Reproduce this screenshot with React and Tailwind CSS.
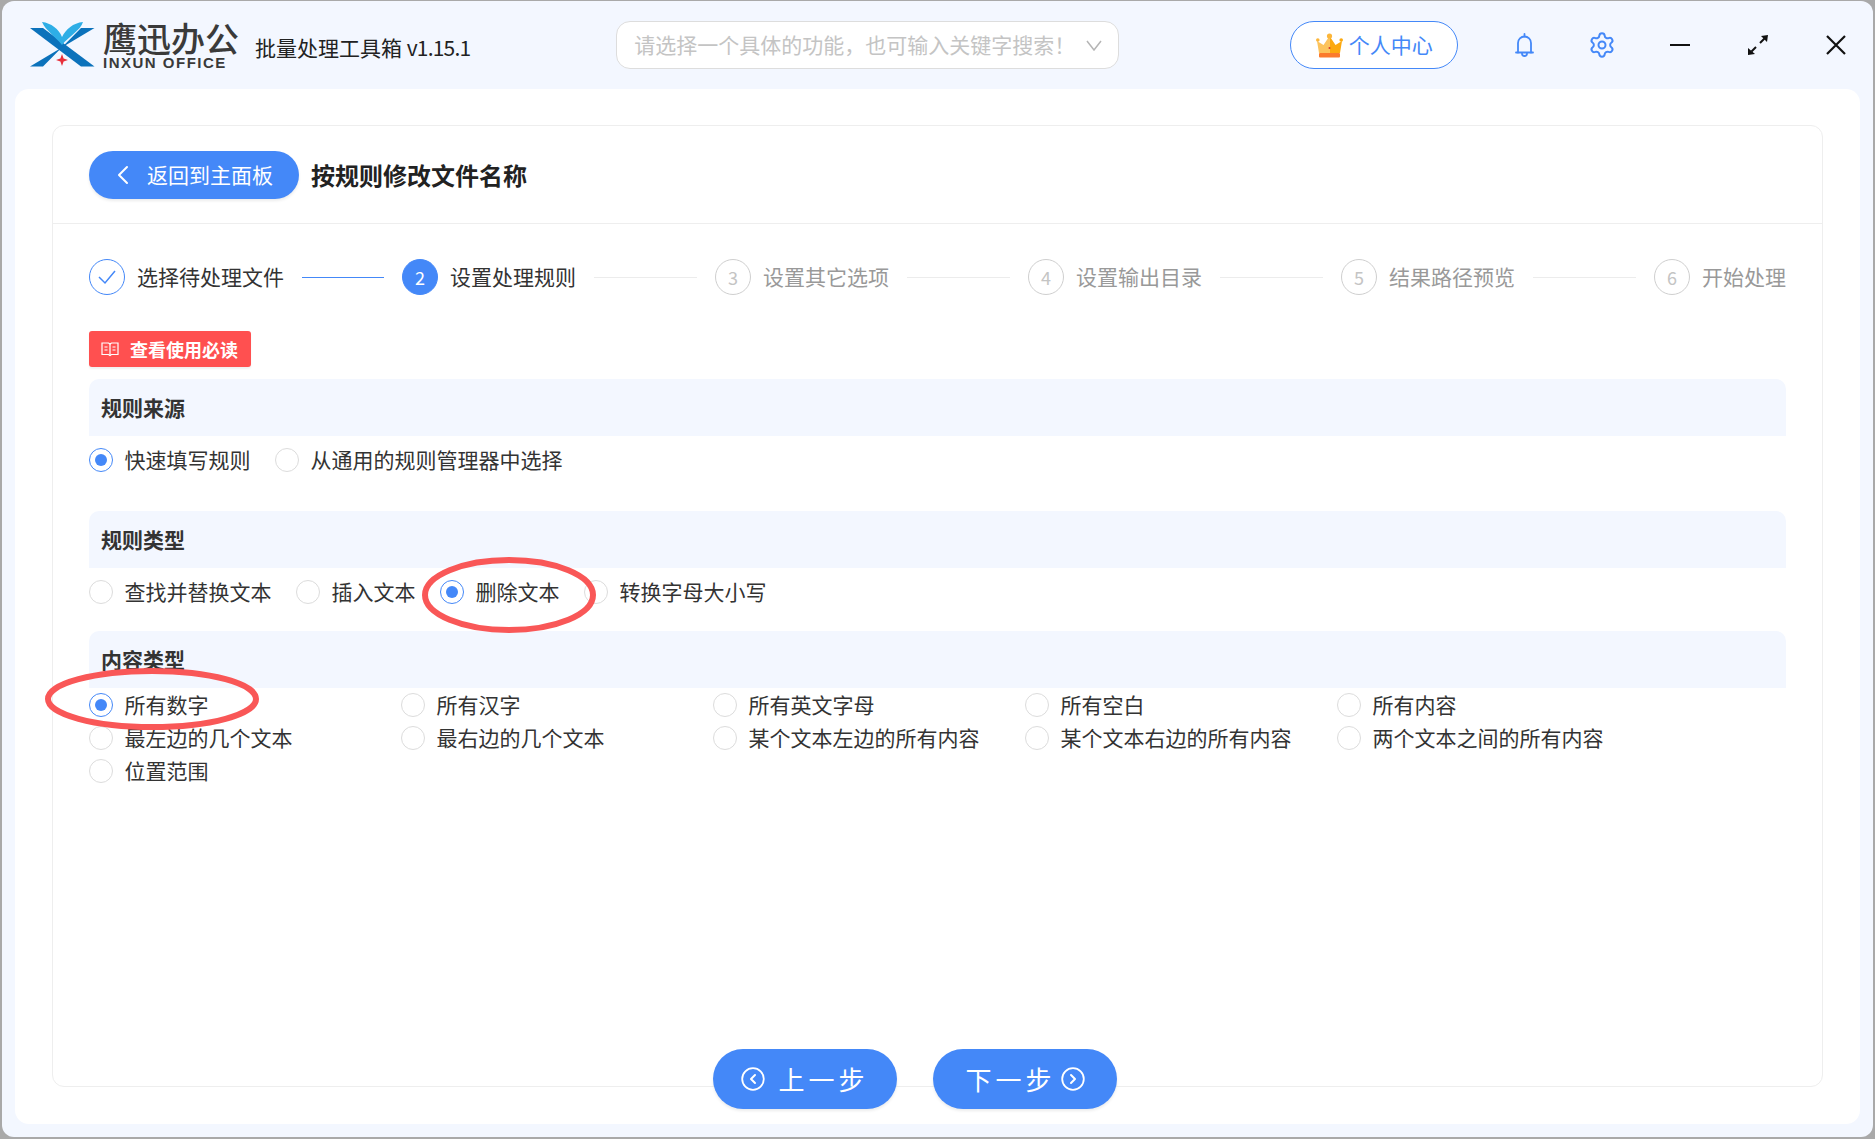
import React from "react";
import { Settings } from "lucide-react";

const STEPS = ["选择待处理文件", "设置处理规则", "设置其它选项", "设置输出目录", "结果路径预览", "开始处理"];

function Logo() {
  return (
    <svg width="66" height="46" viewBox="28 21 66 46" className="shrink-0">
      <polygon points="29,27 42,27 93.5,65.5 80,65.5" fill="#0b72bb" />
      <polygon points="93.5,27 80,27 42,65.5 29,65.5" fill="#0b72bb" />
      <path d="M41 21 C50 22 58 28 61 36 C65 28 72 22 82 21 C79 30 68 35 61 44 C54 35 45 30 41 21 Z" fill="#2eaee6" />
      <path d="M61 53 L62.6 57.4 L67 59 L62.6 60.6 L61 65 L59.4 60.6 L55 59 L59.4 57.4 Z" fill="#e8303a" />
    </svg>
  );
}

function Crown() {
  return (
    <svg width="27" height="25" viewBox="0 0 27 25" className="shrink-0">
      <path d="M3 20 L1 8 L7.5 12 L13.5 3 L13.5 20 Z" fill="#fcc35c" />
      <path d="M24 20 L26 8 L19.5 12 L13.5 3 L13.5 20 Z" fill="#fca90f" />
      <circle cx="1.8" cy="7" r="1.8" fill="#fcb63a" />
      <circle cx="25.2" cy="7" r="1.8" fill="#fca90f" />
      <circle cx="13.5" cy="3" r="2.6" fill="#fcb63a" />
      <rect x="3" y="20" width="21" height="4.5" rx="1" fill="#fb7a2c" />
      <circle cx="13.5" cy="15" r="1" fill="#d5362b" />
    </svg>
  );
}

function Bell() {
  return (
    <svg width="19" height="24" viewBox="0 0 19 24" fill="none" stroke="#4488f8" strokeWidth="1.8" strokeLinecap="round" strokeLinejoin="round" className="shrink-0">
      <path d="M3 19.5V10a6.5 6.5 0 0 1 13 0v9.500" />
      <path d="M1 19.500h17" />
      <path d="M7 20.500a2.500 2.500 0 0 0 5 0" />
      <path d="M9.500 1v2.500" />
    </svg>
  );
}

function Expand() {
  return (
    <svg width="20" height="20" viewBox="0 0 20 20" className="shrink-0">
      <path d="M12 8 L16.500 3.500" stroke="#111" strokeWidth="2" />
      <path d="M13 1 L20 0 L19 7 Z" fill="#111" />
      <path d="M8 12 L3.500 16.500" stroke="#111" strokeWidth="2" />
      <path d="M0 13 L0 20 L7 19 Z" fill="#111" />
    </svg>
  );
}

function Close() {
  return (
    <svg width="20" height="20" viewBox="0 0 20 20" stroke="#111" strokeWidth="2.200" className="shrink-0">
      <path d="M1 1 L19 19 M19 1 L1 19" />
    </svg>
  );
}

function Chevron({ dir = "left", size = 14, h = 20, w = 2 }) {
  return (
    <svg width={size} height={h} viewBox="0 0 14 20" fill="none" stroke="currentColor" strokeWidth={w} strokeLinecap="round" strokeLinejoin="round" className="shrink-0">
      <path d={dir === "left" ? "M11 2 L3 10 L11 18" : "M3 2 L11 10 L3 18"} />
    </svg>
  );
}

function CircleChevron({ dir }) {
  return (
    <svg width="24" height="24" viewBox="0 0 24 24" fill="none" stroke="white" strokeWidth="1.800" strokeLinecap="round" strokeLinejoin="round" className="shrink-0">
      <circle cx="12" cy="12" r="10.800" />
      <path d={dir === "left" ? "M14 8 L10 12 L14 16" : "M10 8 L14 12 L10 16"} strokeWidth="2" />
    </svg>
  );
}

function Book() {
  return (
    <svg width="18" height="17" viewBox="0 0 18 17" fill="none" stroke="white" strokeWidth="1.200" className="shrink-0">
      <path d="M1 2h6.500L9 3l1.500-1H17v11.500h-6.500L9 14.500l-1.500-1H1z" />
      <path d="M9 3v11.500M3.500 6h3M3.500 9h3M11.500 6h3M11.500 9h3" />
    </svg>
  );
}

function Radio({ label, checked }) {
  return (
    <label className="flex items-center gap-[11.500px]">
      <span className={"flex h-6 w-6 shrink-0 items-center justify-center rounded-full border bg-white " + (checked ? "border-[#4488f8]" : "border-[#dcdcdc]")}>
        {checked && <span className="h-3 w-3 rounded-full bg-[#4488f8]" />}
      </span>
      <span className="-mt-[2px] whitespace-nowrap text-[21px] leading-6 text-[#333]">{label}</span>
    </label>
  );
}

function SectionHead({ title }) {
  return (
    <div className="flex h-[57px] items-center rounded-t-[10px] bg-[#f3f7ff] pl-3">
      <span className="text-[21px] font-bold text-[#333]">{title}</span>
    </div>
  );
}

function Step({ index, label, last }) {
  const done = index === 0;
  const active = index === 1;
  return (
    <div className={"flex items-center " + (last ? "flex-none" : "flex-1")}>
      <div
        className={
          "flex h-9 w-9 shrink-0 items-center justify-center rounded-full border text-[18px] " +
          (done
            ? "border-[#4488f8] text-[#4488f8]"
            : active
              ? "border-[#4488f8] bg-[#4488f8] text-white"
              : "border-[#cfcfcf] text-[#c4c4c4]")
        }
      >
        {done ? (
          <svg width="20" height="16" viewBox="0 0 20 16" fill="none" stroke="#4488f8" strokeWidth="1.500">
            <path d="M2 8 L8 14 L18 2" />
          </svg>
        ) : (
          index + 1
        )}
      </div>
      <span className={"ml-3 whitespace-nowrap text-[21px] " + (index < 2 ? "text-[#333]" : "text-[#999]")}>{label}</span>
      {!last && <div className={"ml-[18px] mr-[18px] h-px flex-1 " + (index === 0 ? "bg-[#4488f8]" : "bg-[#ececec]")} />}
    </div>
  );
}

export default function App() {
  return (
    <div className="relative h-[1139px] w-[1875px] overflow-hidden bg-[#a9a9a9] pb-[2px] pl-[2px] pr-[2px] pt-px font-['Noto_Sans_CJK_SC','Noto_Sans',sans-serif]">
      <div className="flex h-full flex-col rounded-[12px] bg-[#f3f7ff]">
        {/* title bar */}
        <header className="flex h-[88px] shrink-0 items-center">
          <div className="ml-[27px] flex items-center">
            <Logo />
            <div className="ml-[8px] flex flex-col">
              <span className="text-[34px] font-medium leading-[32px] text-[#3a3a3a]">鹰迅办公</span>
              <span className="mt-[3px] font-['Liberation_Sans',sans-serif] text-[15px] font-bold leading-[12px] tracking-[1.500px] text-[#3a3a3a]">INXUN OFFICE</span>
            </div>
          </div>
          <span className="ml-[16px] mt-[6px] whitespace-nowrap text-[21px] text-[#222]">
            批量处理工具箱 <span className="tracking-[-0.800px]">v1.15.1</span>
          </span>
          <div className="ml-[146px] flex h-12 w-[503px] items-center justify-between rounded-[14px] border border-[#dddddd] bg-white pl-[17px] pr-[16px]">
            <span className="whitespace-nowrap text-[21px] text-[#c4c4c4]">请选择一个具体的功能，也可输入关键字搜索！</span>
            <svg width="16" height="11" viewBox="0 0 16 11" fill="none" stroke="#b5b5b5" strokeWidth="1.500"><path d="M1 1 L8 10 L15 1" /></svg>
          </div>
          <button className="ml-[171px] flex h-12 w-[168px] items-center justify-center gap-[6px] rounded-full border border-[#4488f8] bg-white text-[21px] text-[#4488f8]">
            <Crown />
            个人中心
          </button>
          <span className="ml-[57px] flex"><Bell /></span>
          <span className="ml-[54px] flex"><Settings size={28} color="#4488f8" strokeWidth={1.700} /></span>
          <span className="ml-[54px] h-[2px] w-5 bg-[#111]" />
          <span className="ml-[58px] flex"><Expand /></span>
          <span className="ml-[58px] flex"><Close /></span>
        </header>

        {/* content card */}
        <main className="mx-[13px] mb-[13px] flex flex-1 flex-col rounded-[14px] bg-white px-[37px] pb-[37px] pt-[36px]">
          <div className="relative flex flex-1 flex-col rounded-[12px] border border-[#eeeeee]">
            <div className="flex h-[98px] shrink-0 items-center border-b border-[#eeeeee] px-9">
              <button className="flex h-12 w-[210px] items-center rounded-full bg-[#4488f8] pl-[27px] text-[21px] text-white shadow-[0_2px_3px_rgba(0,0,0,0.08)]">
                <Chevron dir="left" />
                <span className="ml-[17px]">返回到主面板</span>
              </button>
              <h1 className="ml-3 text-[24px] font-bold text-[#222]">按规则修改文件名称</h1>
            </div>

            <div className="flex flex-1 flex-col px-9 pt-[35px]">
              <div className="flex items-center">
                {STEPS.map((s, i) => (
                  <Step key={s} index={i} label={s} last={i === STEPS.length - 1} />
                ))}
              </div>

              <button className="mt-9 flex h-9 w-[162px] items-center gap-[11px] rounded-[3px] bg-[#ff5050] pl-3 text-[18px] font-bold text-white shadow-[0_2px_2px_rgba(0,0,0,0.06)]">
                <Book />
                查看使用必读
              </button>

              <div className="mt-3">
                <SectionHead title="规则来源" />
                <div className="mt-3 flex gap-[24.500px]">
                  <Radio label="快速填写规则" checked />
                  <Radio label="从通用的规则管理器中选择" />
                </div>
              </div>

              <div className="mt-[39px]">
                <SectionHead title="规则类型" />
                <div className="mt-3 flex gap-[24.500px]">
                  <Radio label="查找并替换文本" />
                  <Radio label="插入文本" />
                  <Radio label="删除文本" checked />
                  <Radio label="转换字母大小写" />
                </div>
              </div>

              <div className="mt-[27px]">
                <SectionHead title="内容类型" />
                <div className="grid grid-cols-[repeat(5,312px)] auto-rows-[33px] items-center">
                  <Radio label="所有数字" checked />
                  <Radio label="所有汉字" />
                  <Radio label="所有英文字母" />
                  <Radio label="所有空白" />
                  <Radio label="所有内容" />
                  <Radio label="最左边的几个文本" />
                  <Radio label="最右边的几个文本" />
                  <Radio label="某个文本左边的所有内容" />
                  <Radio label="某个文本右边的所有内容" />
                  <Radio label="两个文本之间的所有内容" />
                  <Radio label="位置范围" />
                </div>
              </div>
            </div>

            {/* footer buttons straddle the panel's lower border */}
            <div className="absolute -bottom-[23px] left-0 right-0 flex justify-center gap-9 pr-[45px]">
              <button className="flex h-[60px] w-[184px] items-center justify-center gap-[13px] rounded-full bg-[#4488f8] text-[26px] tracking-[4px] text-white shadow-[0_2px_3px_rgba(0,0,0,0.08)]">
                <CircleChevron dir="left" />
                <span className="-mt-[2px]">上一步</span>
              </button>
              <button className="flex h-[60px] w-[184px] items-center justify-center gap-[5px] rounded-full bg-[#4488f8] text-[26px] tracking-[4px] text-white shadow-[0_2px_3px_rgba(0,0,0,0.08)]">
                <span className="-mt-[2px]">下一步</span>
                <CircleChevron dir="right" />
              </button>
            </div>
          </div>
        </main>
      </div>

      {/* red annotation rings */}
      <svg className="pointer-events-none absolute left-[422px] top-[557px]" width="176" height="76" viewBox="0 0 176 76" fill="none">
        <ellipse cx="87" cy="38" rx="84" ry="35" stroke="#f95757" strokeWidth="6" />
      </svg>
      <svg className="pointer-events-none absolute left-[44px] top-[667px]" width="216" height="64" viewBox="0 0 216 64" fill="none">
        <ellipse cx="108" cy="32" rx="104" ry="28" stroke="#f95757" strokeWidth="6" />
      </svg>
    </div>
  );
}
